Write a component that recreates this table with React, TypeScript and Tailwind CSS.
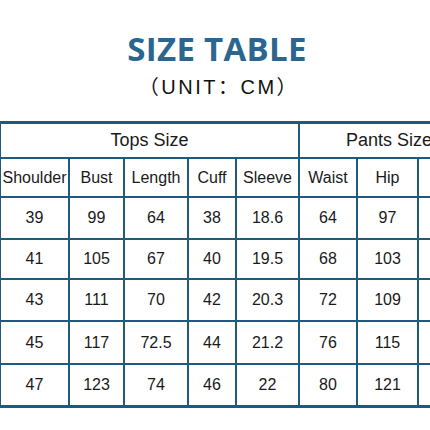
import React from 'react';

const rows = [
  ['39', '99', '64', '38', '18.6', '64', '97', ''],
  ['41', '105', '67', '40', '19.5', '68', '103', ''],
  ['43', '111', '70', '42', '20.3', '72', '109', ''],
  ['45', '117', '72.5', '44', '21.2', '76', '115', ''],
  ['47', '123', '74', '46', '22', '80', '121', ''],
];

const heads = ['Shoulder', 'Bust', 'Length', 'Cuff', 'Sleeve', 'Waist', 'Hip', ''];
const widths = ['w-[69px]', 'w-[55px]', 'w-[64px]', 'w-[48px]', 'w-[63px]', 'w-[58px]', 'w-[61px]', 'w-[61px]'];
const rowH = ['h-[42px]', 'h-[40px]', 'h-[42px]', 'h-[43px]', 'h-[41px]'];

const cell = 'border-2 border-[#1f5a7d] text-center align-middle p-0';

export default function App() {
  return (
    <div className="w-[430px] h-[430px] bg-white overflow-hidden" style={{ fontFamily: '"Liberation Sans", Arial, sans-serif' }}>
      <div className="pt-[31px] flex flex-col items-center">
        <h1
          className="text-[33px] leading-[36px] font-bold text-[#2b6690] tracking-[0.3px] ml-[4px]"
          style={{ fontFamily: '"Open Sans", "Noto Sans", sans-serif' }}
        >
          SIZE TABLE
        </h1>
        <p
          className="mt-[8px] text-[20px] leading-[24px] text-[#111] tracking-[2.5px] ml-[8px]"
          style={{ fontFamily: '"Liberation Sans", "Noto Sans CJK SC", sans-serif' }}
        >
          （UNIT：CM）
        </p>
      </div>
      <div className="mt-[22px] w-[520px] border-t-[3px] border-b-[3px] border-[#1f5a7d] -ml-[1px]">
        <table className="border-collapse table-fixed text-[#1a1a1a]">
          <colgroup>
            {widths.map((w, i) => (
              <col key={i} className={w} />
            ))}
          </colgroup>
          <tbody>
            <tr className="h-[34px]">
              <td colSpan={5} className={`${cell} border-t-0 text-[18px]`}>Tops Size</td>
              <td colSpan={3} className={`${cell} border-t-0 text-[18px]`}>Pants Size</td>
            </tr>
            <tr className="h-[39px]">
              {heads.map((h, i) => (
                <td key={i} className={`${cell} text-[16px] whitespace-nowrap`}>{h}</td>
              ))}
            </tr>
            {rows.map((r, ri) => (
              <tr key={ri} className={rowH[ri]}>
                {r.map((v, i) => (
                  <td key={i} className={`${cell} ${ri === rows.length - 1 ? 'border-b-0' : ''} text-[16px]`}>{v}</td>
                ))}
              </tr>
            ))}
          </tbody>
        </table>
      </div>
    </div>
  );
}
